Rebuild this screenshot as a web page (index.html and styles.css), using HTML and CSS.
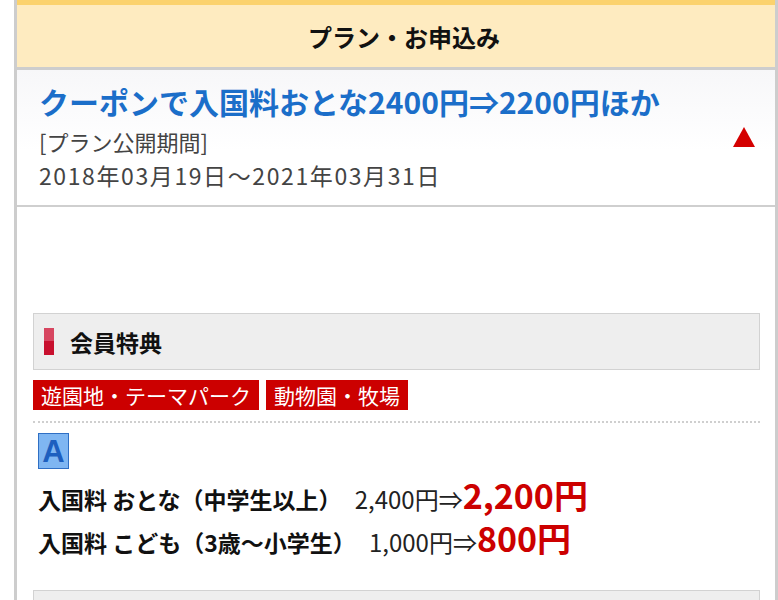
FILE: index.html
```html
<!DOCTYPE html>
<html lang="ja">
<head>
    <meta charset="UTF-8">
    <meta name="viewport" content="width=device-width, initial-scale=1.0">
    <title>プラン・お申込み</title>
    <link rel="stylesheet" href="styles.css">
</head>
<body>
    <div class="pagina">
        <div class="cabecera">
            <h1>プラン・お申込み</h1>
        </div>

        <div class="plan">
            <div class="plan-texto">
                <h2>クーポンで入国料おとな2400円⇒2200円ほか</h2>
                <p>[プラン公開期間]</p>
                <p class="fechas">2018年03月19日～2021年03月31日</p>
            </div>
            <svg class="flecha" width="22" height="20" viewBox="0 0 22 20">
                <polygon points="11,0 22,20 0,20" fill="#d40000"/>
            </svg>
        </div>

        <div class="contenido">
            <div class="titulo-seccion">
                <span class="barra"></span>
                <h3>会員特典</h3>
            </div>

            <div class="etiquetas">
                <span class="etiqueta">遊園地・テーマパーク</span>
                <span class="etiqueta">動物園・牧場</span>
            </div>

            <div class="beneficio">
                <div class="marca">A</div>
                <p class="precio"><b>入国料 おとな（中学生以上）</b> <span class="antes">2,400円⇒</span><span class="nuevo">2,200円</span></p>
                <p class="precio"><b>入国料 こども（3歳～小学生）</b> <span class="antes">1,000円⇒</span><span class="nuevo">800円</span></p>
            </div>

            <div class="caja-siguiente"></div>
        </div>
    </div>
</body>
</html>
```

FILE: styles.css
```css
body {
    margin: 0;
    background: #fff;
    font-family: "Noto Sans CJK JP", "Noto Sans", sans-serif;
    color: #222;
    overflow: hidden;
}

.pagina {
    margin-left: 14px;
    border-left: 3px solid #cdcdcd;
    border-right: 3px solid #cdcdcd;
    min-height: 600px;
}

.cabecera {
    background: #feebc0;
    border-top: 5px solid #fbd26e;
    border-bottom: 3px solid #cdcdcd;
    height: 62px;
    display: flex;
    justify-content: center;
    align-items: center;
}

.cabecera h1 {
    margin: 0;
    font-size: 24px;
    font-weight: 700;
    color: #111;
    padding-left: 16px;
}

.plan {
    display: flex;
    align-items: center;
    justify-content: space-between;
    padding: 12px 20px 13px 22px;
    background: linear-gradient(180deg, #f7f7f9, #fff 60%);
    border-bottom: 2px solid #cfcfcf;
}

.plan h2 {
    margin: 0 0 4px;
    font-size: 30px;
    font-weight: 700;
    color: #1b6ec9;
    line-height: 38px;
}

.plan p {
    margin: 0;
    font-size: 22px;
    line-height: 34px;
    color: #444;
}

.plan .fechas {
    font-size: 23px;
    letter-spacing: 1.6px;
}

.contenido {
    padding: 106px 15px 0 16px;
}

.titulo-seccion {
    display: flex;
    align-items: center;
    gap: 16px;
    height: 55px;
    padding-left: 10px;
    background: #eeeeee;
    border: 1px solid #d2d2d2;
}

.barra {
    width: 10px;
    height: 27px;
    background: linear-gradient(180deg, #d74660 50%, #c8102e 50%);
}

.titulo-seccion h3 {
    margin: 0;
    font-size: 23px;
    font-weight: 700;
    color: #111;
}

.etiquetas {
    display: flex;
    gap: 7px;
    padding: 10px 0 11px;
    border-bottom: 2px dotted #cfcfcf;
}

.etiqueta {
    background: #cc0000;
    color: #fff;
    font-size: 21px;
    line-height: 30px;
    padding: 0 8px;
}

.beneficio {
    padding: 10px 5px 27px;
}

.marca {
    width: 29px;
    height: 34px;
    background: #7fb6f2;
    border: 1px solid #2f6fc4;
    color: #1d5fbf;
    font-family: "Liberation Sans", sans-serif;
    font-weight: 700;
    font-size: 31px;
    line-height: 35px;
    text-align: center;
    margin-bottom: 8px;
}

.precio {
    margin: 0;
    height: 43px;
    font-size: 23px;
    line-height: 43px;
    color: #111;
    white-space: nowrap;
}

.precio b {
    font-weight: 700;
    margin-right: 8px;
}

.antes {
    font-size: 24px;
    color: #222;
}

.nuevo {
    display: inline-block;
    color: #cc0000;
    font-size: 34px;
    font-weight: 700;
    line-height: 36px;
}

.caja-siguiente {
    height: 40px;
    background: #eeeeee;
    border: 1px solid #d2d2d2;
}
```
